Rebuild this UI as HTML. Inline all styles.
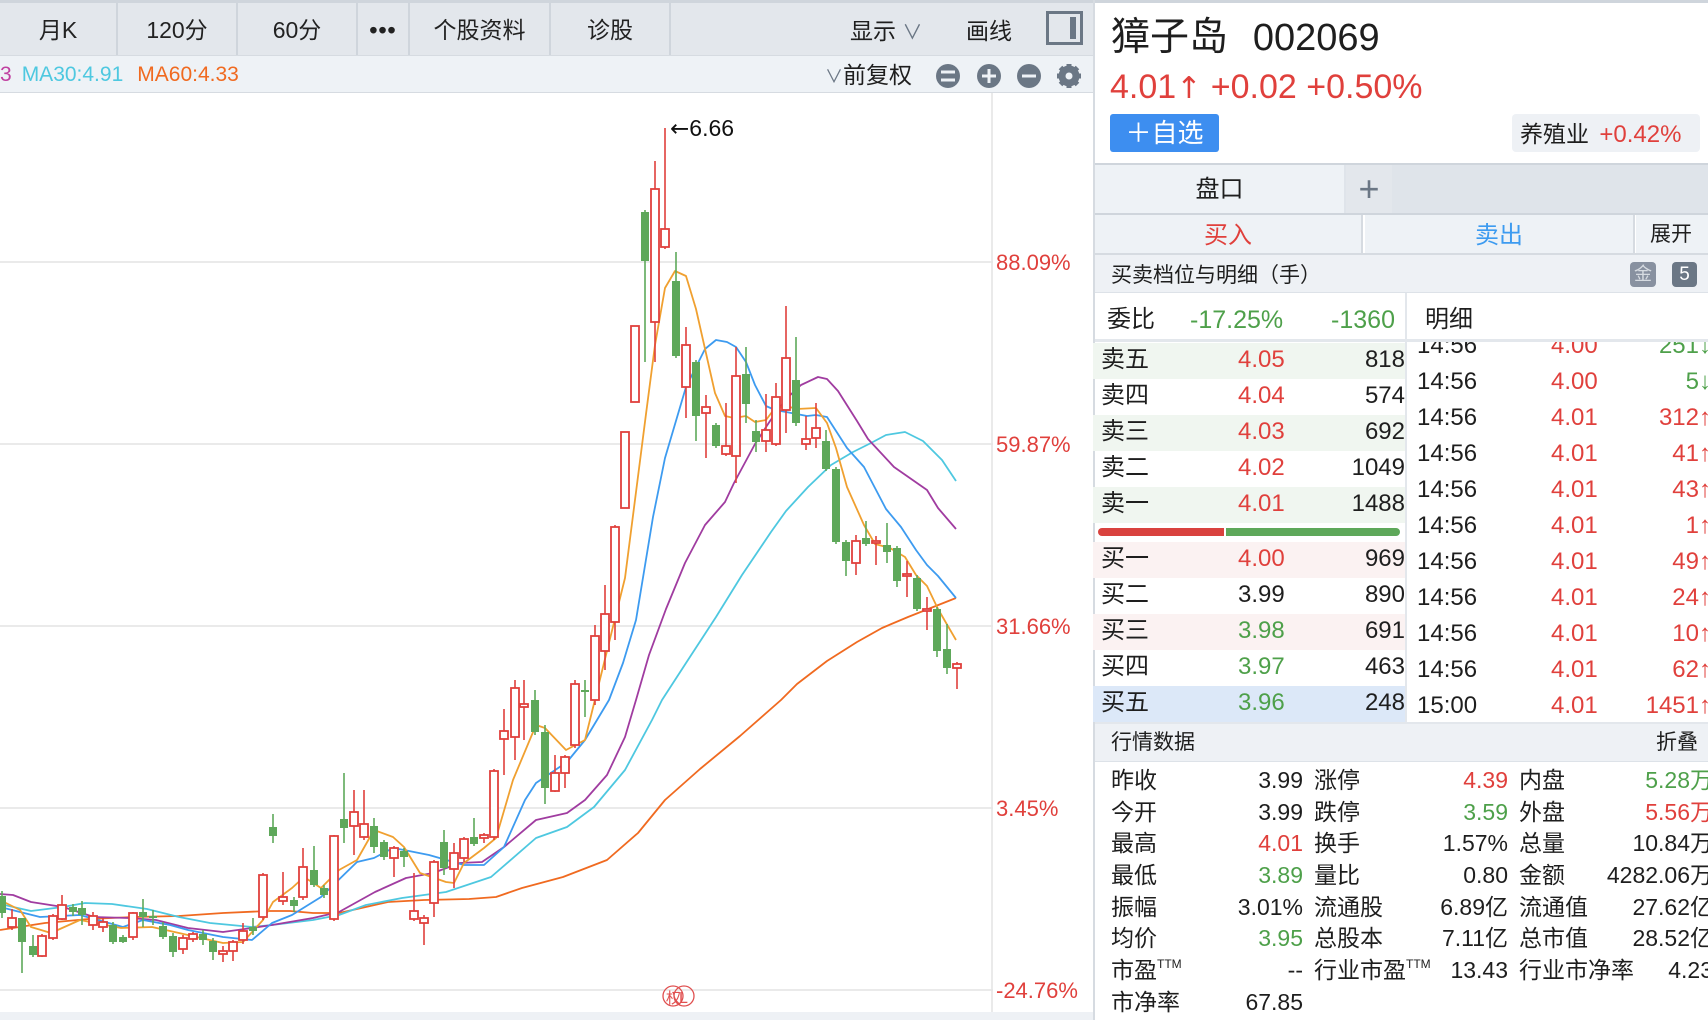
<!DOCTYPE html>
<html><head><meta charset="utf-8">
<style>
*{margin:0;padding:0;box-sizing:border-box}
body{width:1708px;height:1020px;overflow:hidden;background:#fff;font-family:"Liberation Sans","Noto Sans CJK SC",sans-serif;color:#1e1e1e}
#root{position:relative;width:1708px;height:1020px;overflow:hidden}
.a{position:absolute;white-space:nowrap}
.tb{position:absolute;top:3px;height:52px;background:#e3e7ec;border-right:2px solid #cfd5dc;font-size:23px;line-height:54px;text-align:center;color:#222}
.r{color:#e0403c}.g{color:#4ea04a}.k{color:#1e1e1e}
.row{position:absolute;left:1093px;width:312px;height:36px;font-size:24px;line-height:34px}
.row span{position:absolute}
.dt{position:absolute;left:1406px;width:302px;height:36px;font-size:24px;line-height:36px}
.dt span{position:absolute}
.qd{position:absolute;height:32px;font-size:23px;line-height:32px}
.qd span{position:absolute}
</style></head><body><div id="root">
<div class="a" style="left:0;top:0;width:1093px;height:3px;background:#cfd5dc"></div>
<div class="a" style="left:0;top:3px;width:1093px;height:52px;background:#e3e7ec"></div>
<div class="tb" style="left:0;width:118px">月K</div>
<div class="tb" style="left:118px;width:120px">120分</div>
<div class="tb" style="left:238px;width:120px">60分</div>
<div class="tb" style="left:358px;width:52px;font-weight:bold;letter-spacing:1px">•••</div>
<div class="tb" style="left:410px;width:141px">个股资料</div>
<div class="tb" style="left:551px;width:120px">诊股</div>
<div class="a" style="left:850px;top:5px;line-height:52px;font-size:23px">显示 <span style="color:#6b7785;font-size:20px">∨</span></div>
<div class="a" style="left:966px;top:5px;line-height:52px;font-size:23px">画线</div>
<div class="a" style="left:1046px;top:11px;width:37px;height:34px;border:3px solid #6b7785;background:#e3e7ec"><div style="position:absolute;right:4px;top:3px;width:6px;height:22px;background:#6b7785"></div></div>
<div class="a" style="left:0;top:55px;width:1093px;height:38px;background:#eef2f6;border-top:1px solid #d6dbe1;border-bottom:1px solid #d6dbe1"></div>
<div class="a" style="left:0;top:56px;line-height:38px;font-size:21px"><span style="color:#c040a0">3</span><span style="color:#4ec8e0;margin-left:10px">MA30:4.91</span><span style="color:#f06a20;margin-left:14px">MA60:4.33</span></div>
<div class="a" style="left:825px;top:56px;line-height:38px;font-size:23px"><span style="color:#6b7785;font-size:18px">∨</span>前复权</div>
<svg class="a" style="left:930px;top:62px" width="160" height="30">
<g fill="#6b7785"><circle cx="18" cy="14" r="12"/><circle cx="59" cy="14" r="12"/><circle cx="99" cy="14" r="12"/></g>
<g stroke="#eef2f6" stroke-width="3"><line x1="11" y1="10" x2="25" y2="10"/><line x1="11" y1="18" x2="25" y2="18"/><line x1="52" y1="14" x2="66" y2="14"/><line x1="59" y1="7" x2="59" y2="21"/><line x1="92" y1="14" x2="106" y2="14"/></g>
<g transform="translate(139,14)"><circle r="8" fill="none" stroke="#6b7785" stroke-width="5"/><g stroke="#6b7785" stroke-width="5"><line x1="0" y1="-12" x2="0" y2="12"/><line x1="-12" y1="0" x2="12" y2="0"/><line x1="-8.5" y1="-8.5" x2="8.5" y2="8.5"/><line x1="-8.5" y1="8.5" x2="8.5" y2="-8.5"/></g><circle r="3.5" fill="#eef2f6"/></g>
</svg>
<svg class="a" style="left:0;top:93px" width="1093" height="927" viewBox="0 93 1093 927">
<g stroke="#e4e4e4" stroke-width="1.5"><line x1="0" y1="262" x2="993" y2="262"/><line x1="0" y1="444" x2="993" y2="444"/><line x1="0" y1="626" x2="993" y2="626"/><line x1="0" y1="808" x2="993" y2="808"/><line x1="0" y1="990" x2="993" y2="990"/><line x1="992" y1="93" x2="992" y2="1012"/></g>
<rect x="0" y="1012" width="1093" height="8" fill="#eef1f5"/>
<g fill="#e0403c" font-size="22" font-family="Liberation Sans,sans-serif"><text x="996" y="270">88.09%</text><text x="996" y="452">59.87%</text><text x="996" y="634">31.66%</text><text x="996" y="816">3.45%</text><text x="996" y="998">-24.76%</text></g>
<text x="670" y="136" font-size="23" fill="#111" font-family="DejaVu Sans,sans-serif">←<tspan font-family="Liberation Sans,sans-serif">6.66</tspan></text>
<g fill="none" stroke-width="1.8" stroke-linejoin="round">
<polyline stroke="#f06a20" points="0,930 45,923 89,919 134,917 179,916 223,913 268,911 290,911 313,913 339,913 357,909 388,902 424,900 469,899 496,897 522,888 563,877 607,860 638,833 665,800 700,769 740,736 781,700 797,684 827,661 857,642 882,628 908,617 956,598"/>
<polyline stroke="#4ec8e0" points="0,904 31,911 63,907 85,903 112,904 147,909 179,917 210,923 252,927 272,925 313,920 339,915 366,905 402,898 446,892 491,877 536,838 567,827 594,807 625,770 652,720 662,700 686,663 716,617 742,575 771,532 786,511 808,487 831,465 853,452 871,443 886,435 905,432 923,441 942,460 956,481"/>
<polyline stroke="#a03ca0" points="0,894 13,895 31,902 63,907 94,917 129,918 156,920 188,928 223,932 252,928 272,925 313,918 339,912 375,892 406,878 433,873 460,863 482,862 504,847 536,820 567,813 585,800 607,775 625,737 636,700 649,655 666,609 685,563 705,525 725,502 734,483 755,444 770,421 786,399 801,385 818,377 827,379 838,391 857,421 868,439 894,467 927,490 938,508 956,529"/>
<polyline stroke="#3d9bf0" points="0,907 40,917 80,915 123,927 143,920 170,925 188,930 223,937 252,940 272,923 292,915 321,897 357,862 374,858 393,848 404,850 429,855 464,865 484,865 504,847 525,800 536,783 567,762 585,740 609,700 623,663 636,620 653,517 665,458 686,387 705,349 716,340 727,342 736,347 746,362 755,385 766,406 775,410 786,412 807,416 816,415 827,417 847,448 864,467 886,509 901,527 916,550 927,565 938,576 956,598"/>
<polyline stroke="#f0a030" points="0,900 20,910 31,927 51,933 80,920 121,928 152,927 179,933 223,943 243,942 263,920 273,902 292,888 304,877 321,888 339,870 357,860 374,830 393,837 404,847 420,873 446,882 454,883 464,863 484,848 496,838 513,780 536,725 545,728 566,750 585,740 605,659 625,578 646,414 655,345 665,288 675,271 686,276 696,309 715,393 725,416 734,418 746,416 755,422 766,420 775,408 786,406 797,409 816,408 827,423 836,448 847,487 864,525 875,544 890,548 905,557 916,575 927,586 938,609 956,640"/>
</g>
<g stroke="#5ea85a" stroke-width="1.6">
<line x1="2" y1="891" x2="2" y2="918"/><line x1="22" y1="918" x2="22" y2="973"/><line x1="33" y1="935" x2="33" y2="957"/><line x1="73" y1="904" x2="73" y2="916"/><line x1="82" y1="901" x2="82" y2="925"/><line x1="113" y1="922" x2="113" y2="944"/><line x1="123" y1="935" x2="123" y2="943"/><line x1="143" y1="899" x2="143" y2="927"/><line x1="153" y1="910" x2="153" y2="925"/><line x1="163" y1="922" x2="163" y2="939"/><line x1="173" y1="933" x2="173" y2="957"/><line x1="203" y1="930" x2="203" y2="945"/><line x1="213" y1="938" x2="213" y2="960"/><line x1="253" y1="918" x2="253" y2="935"/><line x1="273" y1="814" x2="273" y2="843"/><line x1="294" y1="897" x2="294" y2="912"/><line x1="314" y1="846" x2="314" y2="887"/><line x1="324" y1="885" x2="324" y2="898"/><line x1="344" y1="773" x2="344" y2="843"/><line x1="374" y1="818" x2="374" y2="853"/><line x1="384" y1="840" x2="384" y2="860"/><line x1="404" y1="848" x2="404" y2="867"/><line x1="444" y1="830" x2="444" y2="875"/><line x1="474" y1="818" x2="474" y2="846"/><line x1="535" y1="690" x2="535" y2="735"/><line x1="545" y1="725" x2="545" y2="804"/><line x1="585" y1="680" x2="585" y2="717"/><line x1="645" y1="210" x2="645" y2="362"/><line x1="676" y1="252" x2="676" y2="358"/><line x1="696" y1="360" x2="696" y2="441"/><line x1="716" y1="423" x2="716" y2="448"/><line x1="746" y1="347" x2="746" y2="423"/><line x1="756" y1="420" x2="756" y2="452"/><line x1="796" y1="337" x2="796" y2="426"/><line x1="826" y1="430" x2="826" y2="471"/><line x1="836" y1="467" x2="836" y2="544"/><line x1="846" y1="540" x2="846" y2="576"/><line x1="866" y1="521" x2="866" y2="546"/><line x1="887" y1="523" x2="887" y2="563"/><line x1="897" y1="546" x2="897" y2="587"/><line x1="917" y1="575" x2="917" y2="611"/><line x1="937" y1="607" x2="937" y2="657"/><line x1="947" y1="624" x2="947" y2="674"/>
</g>
<g fill="#5ea85a">
<rect x="-2" y="896" width="8" height="17"/><rect x="18" y="918" width="8" height="24"/><rect x="29" y="946" width="8" height="9"/><rect x="69" y="907" width="8" height="5"/><rect x="78" y="908" width="8" height="7"/><rect x="109" y="925" width="8" height="17"/><rect x="119" y="937" width="8" height="5"/><rect x="139" y="912" width="8" height="5"/><rect x="149" y="916" width="8" height="2"/><rect x="159" y="926" width="8" height="11"/><rect x="169" y="936" width="8" height="16"/><rect x="199" y="934" width="8" height="6"/><rect x="209" y="941" width="8" height="11"/><rect x="249" y="927" width="8" height="4"/><rect x="269" y="827" width="8" height="9"/><rect x="290" y="900" width="8" height="6"/><rect x="310" y="870" width="8" height="15"/><rect x="320" y="888" width="8" height="7"/><rect x="340" y="819" width="8" height="9"/><rect x="370" y="826" width="8" height="21"/><rect x="380" y="842" width="8" height="15"/><rect x="400" y="851" width="8" height="6"/><rect x="440" y="842" width="8" height="26"/><rect x="470" y="837" width="8" height="7"/><rect x="531" y="700" width="8" height="32"/><rect x="541" y="732" width="8" height="56"/><rect x="581" y="690" width="8" height="2"/><rect x="641" y="212" width="8" height="49"/><rect x="672" y="281" width="8" height="75"/><rect x="692" y="362" width="8" height="54"/><rect x="712" y="425" width="8" height="21"/><rect x="742" y="374" width="8" height="30"/><rect x="752" y="431" width="8" height="11"/><rect x="792" y="380" width="8" height="43"/><rect x="822" y="441" width="8" height="28"/><rect x="832" y="469" width="8" height="73"/><rect x="842" y="542" width="8" height="19"/><rect x="862" y="538" width="8" height="6"/><rect x="883" y="545" width="8" height="7"/><rect x="893" y="548" width="8" height="33"/><rect x="913" y="578" width="8" height="31"/><rect x="933" y="609" width="8" height="42"/><rect x="943" y="649" width="8" height="19"/>
</g>
<g stroke="#e0403c" stroke-width="1.6">
<line x1="12" y1="909" x2="12" y2="930"/><line x1="42" y1="934" x2="42" y2="957"/><line x1="53" y1="914" x2="53" y2="940"/><line x1="62" y1="895" x2="62" y2="920"/><line x1="93" y1="912" x2="93" y2="930"/><line x1="103" y1="918" x2="103" y2="932"/><line x1="133" y1="912" x2="133" y2="940"/><line x1="183" y1="935" x2="183" y2="954"/><line x1="193" y1="932" x2="193" y2="942"/><line x1="223" y1="946" x2="223" y2="962"/><line x1="233" y1="940" x2="233" y2="961"/><line x1="243" y1="923" x2="243" y2="944"/><line x1="263" y1="873" x2="263" y2="920"/><line x1="283" y1="872" x2="283" y2="905"/><line x1="303" y1="848" x2="303" y2="900"/><line x1="334" y1="835" x2="334" y2="921"/><line x1="354" y1="790" x2="354" y2="855"/><line x1="364" y1="790" x2="364" y2="840"/><line x1="394" y1="846" x2="394" y2="877"/><line x1="414" y1="873" x2="414" y2="921"/><line x1="424" y1="915" x2="424" y2="945"/><line x1="434" y1="860" x2="434" y2="917"/><line x1="454" y1="843" x2="454" y2="888"/><line x1="464" y1="837" x2="464" y2="862"/><line x1="484" y1="833" x2="484" y2="843"/><line x1="494" y1="769" x2="494" y2="840"/><line x1="504" y1="709" x2="504" y2="775"/><line x1="515" y1="680" x2="515" y2="760"/><line x1="524" y1="680" x2="524" y2="740"/><line x1="555" y1="755" x2="555" y2="792"/><line x1="565" y1="755" x2="565" y2="788"/><line x1="575" y1="680" x2="575" y2="748"/><line x1="595" y1="625" x2="595" y2="705"/><line x1="605" y1="585" x2="605" y2="670"/><line x1="615" y1="525" x2="615" y2="640"/><line x1="655" y1="161" x2="655" y2="362"/><line x1="665" y1="128" x2="665" y2="249"/><line x1="686" y1="327" x2="686" y2="418"/><line x1="706" y1="395" x2="706" y2="458"/><line x1="726" y1="403" x2="726" y2="456"/><line x1="736" y1="347" x2="736" y2="483"/><line x1="766" y1="394" x2="766" y2="452"/><line x1="776" y1="383" x2="776" y2="446"/><line x1="786" y1="306" x2="786" y2="433"/><line x1="806" y1="416" x2="806" y2="450"/><line x1="816" y1="403" x2="816" y2="448"/><line x1="856" y1="535" x2="856" y2="575"/><line x1="876" y1="536" x2="876" y2="565"/><line x1="907" y1="561" x2="907" y2="597"/><line x1="927" y1="597" x2="927" y2="630"/><line x1="957" y1="662" x2="957" y2="689"/>
</g>
<g fill="#fff" stroke="#e0403c" stroke-width="1.8">
<rect x="8" y="918" width="8" height="9"/><rect x="38" y="936" width="8" height="20"/><rect x="49" y="916" width="8" height="22"/><rect x="58" y="905" width="8" height="14"/><rect x="89" y="916" width="8" height="9"/><rect x="99" y="922" width="8" height="5"/><rect x="129" y="913" width="8" height="24"/><rect x="179" y="938" width="8" height="11"/><rect x="189" y="934" width="8" height="5"/><rect x="219" y="951" width="8" height="3"/><rect x="229" y="942" width="8" height="9"/><rect x="239" y="931" width="8" height="9"/><rect x="259" y="875" width="8" height="42"/><rect x="279" y="897" width="8" height="4"/><rect x="299" y="867" width="8" height="30"/><rect x="330" y="836" width="8" height="83"/><rect x="350" y="812" width="8" height="14"/><rect x="360" y="824" width="8" height="13"/><rect x="390" y="848" width="8" height="10"/><rect x="410" y="911" width="8" height="8"/><rect x="420" y="918" width="8" height="5"/><rect x="430" y="862" width="8" height="41"/><rect x="450" y="853" width="8" height="16"/><rect x="460" y="839" width="8" height="19"/><rect x="480" y="835" width="8" height="3"/><rect x="490" y="771" width="8" height="66"/><rect x="500" y="731" width="8" height="8"/><rect x="511" y="688" width="8" height="49"/><rect x="520" y="704" width="8" height="3"/><rect x="551" y="773" width="8" height="18"/><rect x="561" y="757" width="8" height="16"/><rect x="571" y="684" width="8" height="61"/><rect x="591" y="636" width="8" height="64"/><rect x="601" y="614" width="8" height="37"/><rect x="611" y="527" width="8" height="95"/><rect x="621" y="432" width="8" height="76"/><rect x="631" y="326" width="8" height="76"/><rect x="651" y="189" width="8" height="133"/><rect x="661" y="229" width="8" height="18"/><rect x="682" y="345" width="8" height="42"/><rect x="702" y="407" width="8" height="6"/><rect x="722" y="446" width="8" height="8"/><rect x="732" y="376" width="8" height="80"/><rect x="762" y="430" width="8" height="11"/><rect x="772" y="397" width="8" height="47"/><rect x="782" y="358" width="8" height="52"/><rect x="802" y="439" width="8" height="5"/><rect x="812" y="428" width="8" height="10"/><rect x="852" y="541" width="8" height="22"/><rect x="872" y="541" width="8" height="2"/><rect x="903" y="574" width="8" height="2"/><rect x="923" y="609" width="8" height="2"/><rect x="953" y="664" width="8" height="4"/>
</g>
<g fill="none" stroke="#e05050" stroke-width="1.3"><circle cx="673" cy="996" r="10"/><circle cx="684" cy="996" r="10"/></g>
<text x="666" y="1003" font-size="15" fill="#e05050" font-family="Noto Sans CJK SC,sans-serif">权</text><text x="679" y="1003" font-size="16" fill="#e05050" font-family="Liberation Sans,sans-serif">L</text>
</svg>
<div class="a" style="left:1093px;top:0;width:2px;height:1020px;background:#d6dbe1"></div>
<div class="a" style="left:1095px;top:0;width:613px;height:3px;background:#cfd5dc"></div>
<div class="a" style="left:1111px;top:13px;font-size:39px;line-height:50px">獐子岛 <span style="margin-left:14px;font-size:38px">002069</span></div>
<div class="a r" style="left:1110px;top:66px;font-size:34px;line-height:42px">4.01<span style="font-family:'DejaVu Sans',sans-serif;font-size:30px">↑</span> +0.02 +0.50%</div>
<div class="a" style="left:1110px;top:114px;width:109px;height:38px;background:#3d8ef0;border-radius:3px;color:#fff;font-size:26px;line-height:38px;text-align:center">＋自选</div>
<div class="a" style="left:1512px;top:114px;width:188px;height:38px;background:#eef1f5;border-radius:4px;font-size:23px;line-height:40px;padding-left:8px">养殖业 <span class="r" style="margin-left:4px;font-size:24px">+0.42%</span></div>
<div class="a" style="left:1095px;top:163px;width:613px;height:2px;background:#cfd5dc"></div>
<div class="a" style="left:1095px;top:165px;width:613px;height:48px;background:#dfe4ea"></div>
<div class="a" style="left:1095px;top:165px;width:249px;height:48px;background:#eef2f6;font-size:24px;line-height:50px;text-align:center">盘口</div>
<div class="a" style="left:1346px;top:165px;width:46px;height:48px;background:#e3e7ec;color:#6b7785;font-size:36px;line-height:48px;text-align:center">+</div>
<div class="a" style="left:1095px;top:213px;width:613px;height:2px;background:#cfd5dc"></div>
<div class="a" style="left:1095px;top:215px;width:268px;height:38px;background:#eef2f6;border-right:2px solid #d6dbe1;font-size:24px;line-height:42px;text-align:center;color:#e0403c">买入</div>
<div class="a" style="left:1365px;top:215px;width:270px;height:38px;background:#eef2f6;border-right:2px solid #d6dbe1;font-size:24px;line-height:42px;text-align:center;color:#3d9bf0">卖出</div>
<div class="a" style="left:1636px;top:215px;width:72px;height:38px;background:#eef2f6;font-size:21px;line-height:40px;padding-left:14px">展开</div>
<div class="a" style="left:1095px;top:253px;width:613px;height:2px;background:#d6dbe1"></div>
<div class="a" style="left:1095px;top:255px;width:613px;height:38px;background:#eef1f5;border-bottom:1px solid #dde2e8"></div>
<div class="a" style="left:1111px;top:257px;font-size:21px;line-height:38px">买卖档位与明细（手）</div>
<div class="a" style="left:1630px;top:262px;width:26px;height:25px;background:#8891a0;border-radius:4px;color:#d6dbe1;font-size:18px;line-height:25px;text-align:center">金</div>
<div class="a" style="left:1672px;top:262px;width:25px;height:25px;background:#6b7785;border-radius:4px;color:#fff;font-size:19px;line-height:25px;text-align:center">5</div>
<div class="a" style="left:1405px;top:293px;width:2px;height:430px;background:#e3e7ec"></div>
<div class="a" style="left:1107px;top:300px;font-size:24px;line-height:40px">委比</div>
<div class="a g" style="left:1190px;top:300px;font-size:25px;line-height:40px">-17.25%</div>
<div class="a g" style="left:1290px;top:300px;width:105px;text-align:right;font-size:25px;line-height:40px">-1360</div>
<div class="a" style="left:1425px;top:300px;font-size:24px;line-height:40px">明细</div>
<div class="a" style="left:1095px;top:339px;width:613px;height:3px;background:#e3e7ec"></div>
<div class="row" style="top:343px;background:#f0f6f0"><span style="left:8px">卖五</span><span class="r" style="left:145px">4.05</span><span style="right:0">818</span></div>
<div class="row" style="top:379px"><span style="left:8px">卖四</span><span class="r" style="left:145px">4.04</span><span style="right:0">574</span></div>
<div class="row" style="top:415px;background:#f0f6f0"><span style="left:8px">卖三</span><span class="r" style="left:145px">4.03</span><span style="right:0">692</span></div>
<div class="row" style="top:451px"><span style="left:8px">卖二</span><span class="r" style="left:145px">4.02</span><span style="right:0">1049</span></div>
<div class="row" style="top:487px;background:#f0f6f0"><span style="left:8px">卖一</span><span class="r" style="left:145px">4.01</span><span style="right:0">1488</span></div>
<div class="a" style="left:1098px;top:528px;width:126px;height:8px;background:#d9423e;border-radius:4px 0 0 4px"></div>
<div class="a" style="left:1226px;top:528px;width:174px;height:8px;background:#5ea85a;border-radius:0 4px 4px 0"></div>
<div class="row" style="top:542px;background:#fbf2f2"><span style="left:8px">买一</span><span class="r" style="left:145px">4.00</span><span style="right:0">969</span></div>
<div class="row" style="top:578px"><span style="left:8px">买二</span><span class="k" style="left:145px">3.99</span><span style="right:0">890</span></div>
<div class="row" style="top:614px;background:#fbf2f2"><span style="left:8px">买三</span><span class="g" style="left:145px">3.98</span><span style="right:0">691</span></div>
<div class="row" style="top:650px"><span style="left:8px">买四</span><span class="g" style="left:145px">3.97</span><span style="right:0">463</span></div>
<div class="row" style="top:686px;background:#dce8f8"><span style="left:8px">买五</span><span class="g" style="left:145px">3.96</span><span style="right:0">248</span></div>
<div class="a" style="left:1407px;top:342px;width:301px;height:380px;overflow:hidden">
<div class="dt" style="left:0;top:-14px"><span style="left:10px">14:56</span><span class="r" style="left:144px">4.00</span><span class="g" style="right:-2px">251↓</span></div>
<div class="dt" style="left:0;top:22px"><span style="left:10px">14:56</span><span class="r" style="left:144px">4.00</span><span class="g" style="right:-2px">5↓</span></div>
<div class="dt" style="left:0;top:58px"><span style="left:10px">14:56</span><span class="r" style="left:144px">4.01</span><span class="r" style="right:-2px">312↑</span></div>
<div class="dt" style="left:0;top:94px"><span style="left:10px">14:56</span><span class="r" style="left:144px">4.01</span><span class="r" style="right:-2px">41↑</span></div>
<div class="dt" style="left:0;top:130px"><span style="left:10px">14:56</span><span class="r" style="left:144px">4.01</span><span class="r" style="right:-2px">43↑</span></div>
<div class="dt" style="left:0;top:166px"><span style="left:10px">14:56</span><span class="r" style="left:144px">4.01</span><span class="r" style="right:-2px">1↑</span></div>
<div class="dt" style="left:0;top:202px"><span style="left:10px">14:56</span><span class="r" style="left:144px">4.01</span><span class="r" style="right:-2px">49↑</span></div>
<div class="dt" style="left:0;top:238px"><span style="left:10px">14:56</span><span class="r" style="left:144px">4.01</span><span class="r" style="right:-2px">24↑</span></div>
<div class="dt" style="left:0;top:274px"><span style="left:10px">14:56</span><span class="r" style="left:144px">4.01</span><span class="r" style="right:-2px">10↑</span></div>
<div class="dt" style="left:0;top:310px"><span style="left:10px">14:56</span><span class="r" style="left:144px">4.01</span><span class="r" style="right:-2px">62↑</span></div>
<div class="dt" style="left:0;top:346px"><span style="left:10px">15:00</span><span class="r" style="left:144px">4.01</span><span class="r" style="right:-2px">1451↑</span></div>
</div>
<div class="a" style="left:1095px;top:722px;width:613px;height:40px;background:#eef1f5;border-top:2px solid #e3e7ec;border-bottom:1px solid #dde2e8"></div>
<div class="a" style="left:1111px;top:723px;font-size:21px;line-height:40px">行情数据</div>
<div class="a" style="left:1656px;top:723px;font-size:21px;line-height:40px">折叠</div>
<div class="a" style="left:1095px;top:763px;width:613px;height:257px;overflow:hidden">
<div class="qd" style="top:1px;left:0;width:640px"><span style="left:16px">昨收</span><span style="right:432px">3.99</span><span style="left:219px">涨停</span><span class="r" style="right:227px">4.39</span><span style="left:424px">内盘</span><span class="g" style="right:22px">5.28万</span></div>
<div class="qd" style="top:33px;left:0;width:640px"><span style="left:16px">今开</span><span style="right:432px">3.99</span><span style="left:219px">跌停</span><span class="g" style="right:227px">3.59</span><span style="left:424px">外盘</span><span class="r" style="right:22px">5.56万</span></div>
<div class="qd" style="top:64px;left:0;width:640px"><span style="left:16px">最高</span><span class="r" style="right:432px">4.01</span><span style="left:219px">换手</span><span style="right:227px">1.57%</span><span style="left:424px">总量</span><span style="right:22px">10.84万</span></div>
<div class="qd" style="top:96px;left:0;width:640px"><span style="left:16px">最低</span><span class="g" style="right:432px">3.89</span><span style="left:219px">量比</span><span style="right:227px">0.80</span><span style="left:424px">金额</span><span style="right:22px">4282.06万</span></div>
<div class="qd" style="top:128px;left:0;width:640px"><span style="left:16px">振幅</span><span style="right:432px">3.01%</span><span style="left:219px">流通股</span><span style="right:227px">6.89亿</span><span style="left:424px">流通值</span><span style="right:22px">27.62亿</span></div>
<div class="qd" style="top:159px;left:0;width:640px"><span style="left:16px">均价</span><span class="g" style="right:432px">3.95</span><span style="left:219px">总股本</span><span style="right:227px">7.11亿</span><span style="left:424px">总市值</span><span style="right:22px">28.52亿</span></div>
<div class="qd" style="top:191px;left:0;width:640px"><span style="left:16px">市盈<span style="font-size:12px;position:relative;top:-10px">TTM</span></span><span style="right:432px">--</span><span style="left:219px">行业市盈<span style="font-size:12px;position:relative;top:-10px">TTM</span></span><span style="right:227px">13.43</span><span style="left:424px">行业市净率</span><span style="right:22px">4.23</span></div>
<div class="qd" style="top:223px;left:0;width:640px"><span style="left:16px">市净率</span><span style="right:432px">67.85</span></div>
</div>
</div></body></html>
